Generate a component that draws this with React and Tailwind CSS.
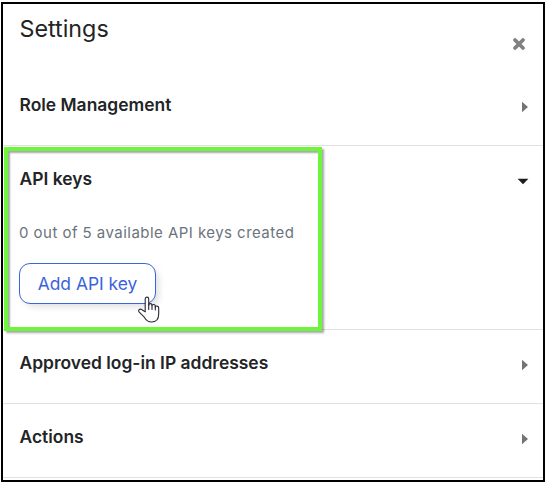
import React from 'react';

function Row({ title, open, children }) {
  return (
    <section className="shrink-0 border-b border-[#e1e1e1]">
      <div className="flex h-[73px] items-start justify-between pl-[16.5px] pr-[14px] pt-[21px]">
        <h2 className="text-[17.45px] font-semibold leading-[24px] text-[#222426]">{title}</h2>
        {open ? (
          <svg className="mt-[11px] h-[7px] w-[12px]" viewBox="0 0 12 7">
            <path d="M.6.7h10.8L6 6.2z" fill="#1c1c1c" />
          </svg>
        ) : (
          <svg className="mt-[8px] h-[12px] w-[8px]" viewBox="0 0 8 12">
            <path d="M1 .8v10.4l6-5.2z" fill="#747474" />
          </svg>
        )}
      </div>
      {children}
    </section>
  );
}

function HandCursor() {
  return (
    <svg className="absolute left-[137px] top-[296px] h-[28px] w-[24px]" viewBox="0 0 24 28">
      <path
        d="M8.2 15.8V3c0-2.5 3.5-2.5 3.5 0v6.2c.1-2.1 3.2-2.1 3.3 0v.6c.2-1.9 3.2-1.7 3.3.3v1c.4-1.6 3.4-1.3 3.4.8v5.8c0 5.5-2.6 8.3-7.2 8.3-3.5 0-5.4-1.6-7.2-4.8L2 15.9c-1.4-2 1.1-3.7 2.9-2.2z"
        fill="#fff"
        stroke="#292936"
        strokeWidth="1.1"
        strokeLinejoin="round"
      />
      <path d="M11.7 8.5v5M15 9.5v4M18.3 10.5v3.5" stroke="#292936" strokeWidth="1.1" strokeLinecap="round" />
    </svg>
  );
}

export default function App() {
  return (
    <div className="relative h-[484px] w-[546px] overflow-hidden bg-white pl-px pt-[2px] font-['Inter',sans-serif]">
      <main className="flex h-[480px] w-[544px] flex-col border-2 border-black bg-white">
        <header className="flex h-[68px] shrink-0 items-start justify-between pl-[16.5px] pr-[17px] pt-[10px]">
          <h1 className="text-[23.3px] font-normal leading-[30px] text-[#222426]">Settings</h1>
          <svg className="mt-[23px] h-[14px] w-[14px]" viewBox="0 0 14 14">
            <path d="M3 3l8 8M11 3l-8 8" stroke="#808080" strokeWidth="3.8" strokeLinecap="round" />
          </svg>
        </header>
        <Row title="Role Management" />
        <Row title="API keys" open>
          <div className="h-[110px] pl-[16px] pt-[4px]">
            <p className="text-[15px] leading-[20px] tracking-[0.46px] text-[#6b747c]">0 out of 5 available API keys created</p>
            <button className="mt-[20px] flex h-[41px] w-[137px] items-center justify-center rounded-[11px] border border-[#3a64dc] bg-white pt-px text-[17.4px] text-[#3a64dc] shadow-[4px_4px_6px_-1px_rgba(0,0,0,0.12)]">
              Add API key
            </button>
          </div>
        </Row>
        <Row title="Approved log-in IP addresses" />
        <Row title="Actions" />
      </main>
      <div className="pointer-events-none absolute left-[4px] top-[147px] h-[184px] w-[318px] border-4 border-[#6df63c] shadow-[2px_2px_2px_rgba(0,0,0,0.35),inset_2px_2px_2px_rgba(0,0,0,0.35)]" />
      <HandCursor />
    </div>
  );
}
